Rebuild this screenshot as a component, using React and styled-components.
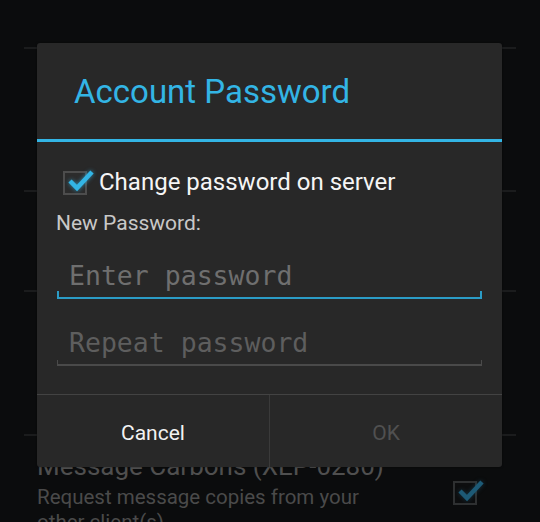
import React from 'react'
import styled, { createGlobalStyle } from 'styled-components'

const GlobalStyle = createGlobalStyle`
  html, body {
    margin: 0;
    padding: 0;
    background: #0b0c0d;
    font-family: Roboto, "Noto Sans", sans-serif;
  }
`

const Screen = styled.div`
  position: relative;
  width: 540px;
  height: 522px;
  overflow: hidden;
  background: #0b0c0d;
`

const List = styled.div`
  display: flex;
  flex-direction: column;
  padding: 0 24px;
`

const Row = styled.div`
  box-sizing: border-box;
  flex-shrink: 0;
  height: ${p => p.$h}px;
  border-bottom: ${p => (p.$last ? 'none' : '2px solid #1b1c1d')};
  display: flex;
  align-items: flex-start;
  justify-content: space-between;
  padding: ${p => (p.$last ? '15px 39px 0 13px' : '0')};
`

const RowText = styled.div`
  display: flex;
  flex-direction: column;
`

const RowTitle = styled.div`
  font-size: 26px;
  line-height: 30px;
  color: #4f4f4f;
  margin-bottom: 4px;
`

const RowSub = styled.div`
  font-size: 20.5px;
  line-height: 25px;
  color: #4a4a4a;
`

const Dim = styled.div`
  margin-top: 28px;
`

const Dialog = styled.div`
  position: absolute;
  left: 37px;
  top: 43px;
  width: 465px;
  height: 424px;
  background: #282828;
  border-radius: 3px;
  display: flex;
  flex-direction: column;
  box-shadow: 0 0 2px rgba(0, 0, 0, 0.6);
`

const TitleBar = styled.div`
  box-sizing: border-box;
  height: 99px;
  display: flex;
  align-items: center;
  padding-left: 37px;
  border-bottom: 3px solid #33b5e5;
`

const Title = styled.h1`
  margin: 0;
  font-weight: 400;
  font-size: 33px;
  color: #33b5e5;
`

const Body = styled.div`
  flex: 1;
  padding: 25px 19px 0 19px;
  display: flex;
  flex-direction: column;
`

const CheckRow = styled.label`
  display: flex;
  align-items: center;
  gap: 12px;
  padding-left: 7px;
  height: 30px;
  color: #f5f5f5;
  font-size: 24px;
`

const Box = styled.span`
  position: relative;
  display: block;
  width: 20px;
  height: 20px;
  border: 2px solid ${p => (p.$dim ? '#2e3031' : '#4d4d4d')};
  background: ${p => (p.$dim ? '#0d0e0f' : '#2c2c2c')};
  flex-shrink: 0;
  margin-top: 2px;

  svg {
    position: absolute;
    left: 1px;
    top: -4px;
    filter: drop-shadow(0 0 2px ${p => (p.$dim ? 'rgba(30, 90, 117, 0.5)' : 'rgba(51, 181, 229, 0.7)')});
  }
`

const FieldLabel = styled.div`
  margin-top: 13px;
  font-size: 21px;
  color: #c8c8c8;
  line-height: 26px;
`

const Field = styled.div`
  position: relative;
  margin-top: ${p => p.$mt}px;
  height: 44px;
  display: flex;
  align-items: center;
  padding-left: 12px;
  font-family: "DejaVu Sans Mono", "Liberation Mono", monospace;
  font-size: 26.5px;
  color: ${p => (p.$focus ? '#6f6f6f' : '#5e5e5e')};
  border-bottom: ${p => (p.$focus ? '2px solid #2b9cc6' : '2px solid #4a4a4a')};
  margin-left: 1px;
  margin-right: 1px;

  &::before, &::after {
    content: '';
    position: absolute;
    bottom: 0;
    width: ${p => (p.$focus ? 2 : 1)}px;
    height: ${p => (p.$focus ? 6 : 4)}px;
    background: ${p => (p.$focus ? '#2b9cc6' : '#4a4a4a')};
  }
  &::before { left: 0; }
  &::after { right: 0; }
`

const Buttons = styled.div`
  height: 72px;
  border-top: 1px solid #434343;
  display: grid;
  grid-template-columns: 232px 1fr;
`

const Button = styled.button`
  background: transparent;
  border: none;
  border-left: ${p => (p.$divider ? '1px solid #3a3a3a' : 'none')};
  font-family: Roboto, sans-serif;
  font-size: 21px;
  color: ${p => (p.$disabled ? '#505050' : '#f2f2f2')};
  padding: 3px 0 0 0;
`

const Check = ({ color = '#33b5e5', size = 30 }) => (
  <svg width={size} height={size * 0.8} viewBox="0 0 30 24">
    <path d="M4 12 L11 19 L26 3" fill="none" stroke={color} strokeWidth="4.5" strokeLinecap="butt" />
  </svg>
)

export default function App() {
  return (
    <Screen>
      <GlobalStyle />
      <List>
        <Row $h={49} />
        <Row $h={143} />
        <Row $h={100} />
        <Row $h={144} />
        <Row $last $h={90}>
          <RowText>
            <RowTitle>Message Carbons (XEP-0280)</RowTitle>
            <RowSub>Request message copies from your</RowSub>
            <RowSub>other client(s)</RowSub>
          </RowText>
          <Dim>
            <Box $dim>
              <Check color="#1d5a76" />
            </Box>
          </Dim>
        </Row>
      </List>

      <Dialog>
        <TitleBar>
          <Title>Account Password</Title>
        </TitleBar>
        <Body>
          <CheckRow>
            <Box>
              <Check />
            </Box>
            Change password on server
          </CheckRow>
          <FieldLabel>New Password:</FieldLabel>
          <Field $focus $mt={17}>Enter password</Field>
          <Field $mt={21}>Repeat password</Field>
        </Body>
        <Buttons>
          <Button>Cancel</Button>
          <Button $divider $disabled>OK</Button>
        </Buttons>
      </Dialog>
    </Screen>
  )
}
